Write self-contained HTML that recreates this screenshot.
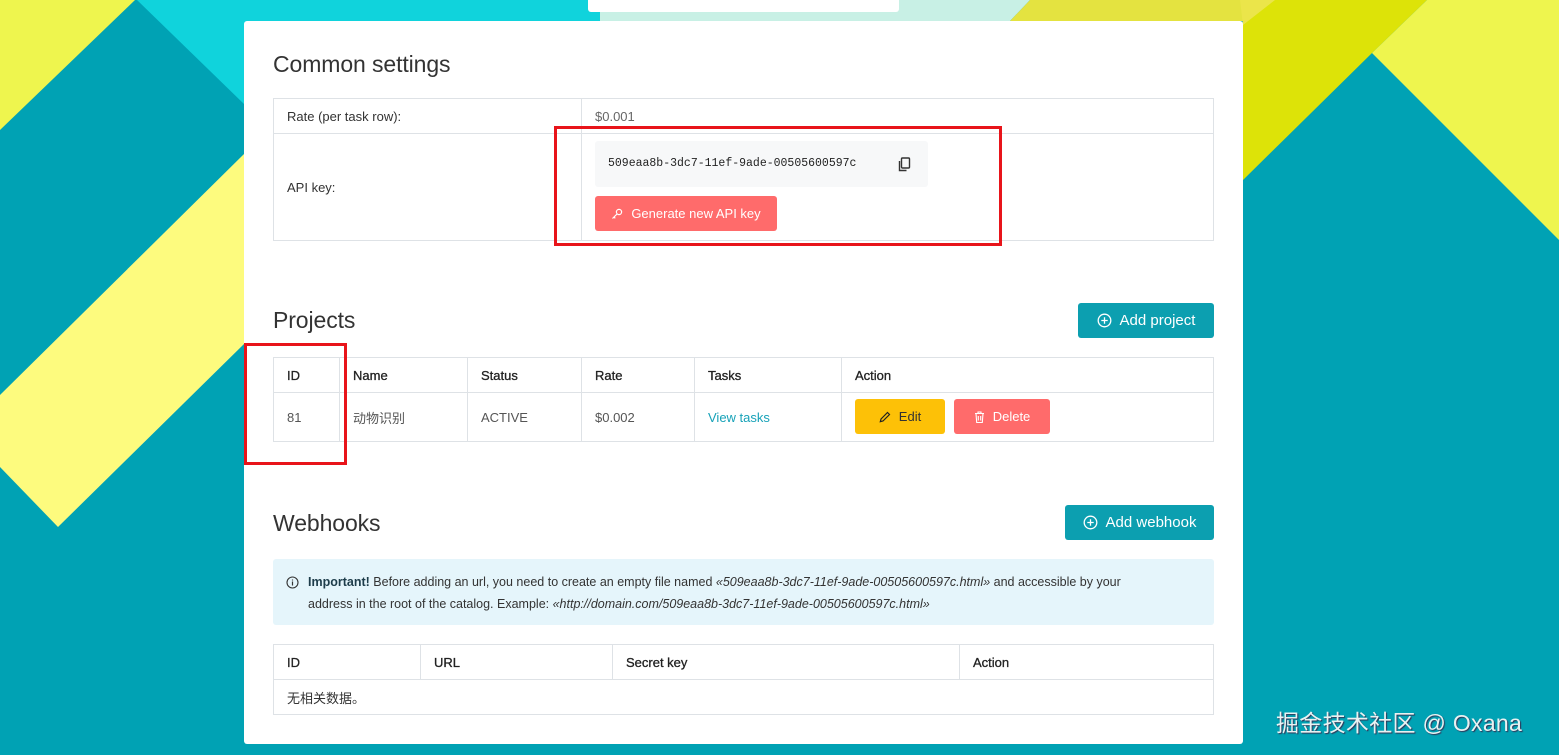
<!DOCTYPE html>
<html><head><meta charset="utf-8"><style>
*{margin:0;padding:0;box-sizing:border-box}
body{width:1559px;height:755px;overflow:hidden;position:relative;background:#00a2b4;font-family:"Liberation Sans","Noto Sans CJK SC",sans-serif;color:#333;font-size:13px}
.a{position:absolute}
svg.bg{position:absolute;left:0;top:0}
.card{left:244px;top:21px;width:999px;height:723px;background:#fff;border-radius:3px}
h2{position:absolute;font-weight:400;font-size:23px;color:#333;letter-spacing:-0.1px}
table{position:absolute;border-collapse:collapse;left:273px;width:941px}
td{border:1px solid #dee2e6;padding:0 13px;vertical-align:middle}
.hd td{color:#222;-webkit-text-stroke:0.3px #222}
.btn{position:absolute;border-radius:3px;color:#fff;font-size:14px;display:flex;align-items:center;justify-content:center;gap:8px}
.red{position:absolute;border:3px solid #e8141a}
</style></head><body>
<svg class="bg" width="1559" height="755">
<polygon points="0,0 135,0 0,130" fill="#eef54e"/>
<polygon points="137,0 600,0 600,30 244,30 244,104" fill="#10d3dc"/>
<polygon points="600,0 1030,0 1010,21 600,21" fill="#c8f0e5"/>
<polygon points="1030,0 1275,0 1255,21 1010,21" fill="#e4e340"/>
<polygon points="244,154 244,344 58,527 0,467 0,395" fill="#fdfb7e"/>
<polygon points="1243,0 1427,0 1372,53 1243,180" fill="#dde308"/>
<polygon points="1240,0 1275,0 1243,25" fill="#ebe54a"/>
<polygon points="1427,0 1559,0 1559,240 1372,53" fill="#eef54e"/>
</svg>
<div class="a" style="left:588px;top:0;width:311px;height:12px;background:#fff;border-radius:0 0 3px 3px"></div>
<div class="a card"></div>

<h2 style="left:273px;top:51px">Common settings</h2>
<table style="top:98px">
<tr style="height:35px"><td style="width:308px">Rate (per task row):</td><td style="color:#666">$0.001</td></tr>
<tr style="height:107px"><td>API key:</td><td></td></tr>
</table>
<div class="a" style="left:595px;top:141px;width:333px;height:46px;background:#f7f8f9;border-radius:3px"></div>
<div class="a" style="left:608px;top:157px;font-family:'Liberation Mono',monospace;font-size:11.5px;color:#222">509eaa8b-3dc7-11ef-9ade-00505600597c</div>
<svg class="a" style="left:897px;top:157px" width="14" height="15" viewBox="0 0 14 15"><rect x="4.5" y="1" width="8" height="10" rx="1" fill="none" stroke="#333" stroke-width="1.4"/><path d="M2.5 4v9.5h7" fill="none" stroke="#333" stroke-width="1.4"/></svg>
<div class="btn" style="left:595px;top:196px;width:182px;height:35px;background:#ff6b6b;font-size:13px">
<svg width="12" height="12" viewBox="0 0 12 12"><circle cx="8" cy="4" r="2.6" fill="none" stroke="#fff" stroke-width="1.2"/><path d="M6 6L1.5 10.5M3 9l1.3 1.3" stroke="#fff" stroke-width="1.2" fill="none"/></svg>Generate new API key</div>

<h2 style="left:273px;top:307px">Projects</h2>
<div class="btn" style="left:1078px;top:303px;width:136px;height:35px;background:#0c9fb0;font-size:15px">
<svg width="15" height="15" viewBox="0 0 15 15"><circle cx="7.5" cy="7.5" r="6.3" fill="none" stroke="#fff" stroke-width="1.3"/><path d="M7.5 4.3v6.4M4.3 7.5h6.4" stroke="#fff" stroke-width="1.3"/></svg>Add project</div>
<table style="top:357px">
<tr class="hd" style="height:35px"><td style="width:66px">ID</td><td style="width:128px">Name</td><td style="width:114px">Status</td><td style="width:113px">Rate</td><td style="width:147px">Tasks</td><td>Action</td></tr>
<tr style="height:49px;color:#555"><td>81</td><td>动物识别</td><td>ACTIVE</td><td>$0.002</td><td style="color:#17a2b8">View tasks</td><td></td></tr>
</table>
<div class="btn" style="left:855px;top:399px;width:90px;height:35px;background:#fdc107;color:#333;font-size:13px">
<svg width="12" height="12" viewBox="0 0 12 12"><path d="M8.5 1.5l2 2L4 10l-2.7.7L2 8z" fill="none" stroke="#222" stroke-width="1.2"/></svg>Edit</div>
<div class="btn" style="left:954px;top:399px;width:96px;height:35px;background:#ff6b6b;font-size:13px">
<svg width="11" height="12" viewBox="0 0 11 12"><path d="M1 2.5h9M4 2.5V1h3v1.5M2 2.5l.7 9h5.6l.7-9M4.3 5v4.5M6.7 5v4.5" fill="none" stroke="#fff" stroke-width="1.1"/></svg>Delete</div>

<h2 style="left:273px;top:510px">Webhooks</h2>
<div class="btn" style="left:1065px;top:505px;width:149px;height:35px;background:#0c9fb0;font-size:15px">
<svg width="15" height="15" viewBox="0 0 15 15"><circle cx="7.5" cy="7.5" r="6.3" fill="none" stroke="#fff" stroke-width="1.3"/><path d="M7.5 4.3v6.4M4.3 7.5h6.4" stroke="#fff" stroke-width="1.3"/></svg>Add webhook</div>
<div class="a" style="left:273px;top:559px;width:941px;height:66px;background:#e5f5fb;border-radius:3px"></div>
<svg class="a" style="left:286px;top:576px" width="13" height="13" viewBox="0 0 13 13"><circle cx="6.5" cy="6.5" r="5.5" fill="none" stroke="#333" stroke-width="1.1"/><path d="M6.5 5.5v4M6.5 3.5v1" stroke="#333" stroke-width="1.2"/></svg>
<div class="a" style="left:308px;top:571px;width:860px;font-size:12.5px;line-height:22px;color:#333"><b style="color:#1d3c4a">Important!</b> Before adding an url, you need to create an empty file named <i>«509eaa8b-3dc7-11ef-9ade-00505600597c.html»</i> and accessible by your address in the root of the catalog. Example: <i>«http://domain.com/509eaa8b-3dc7-11ef-9ade-00505600597c.html»</i></div>
<table style="top:644px">
<tr class="hd" style="height:35px"><td style="width:147px">ID</td><td style="width:192px">URL</td><td style="width:347px">Secret key</td><td>Action</td></tr>
<tr style="height:35px"><td colspan="4">无相关数据。</td></tr>
</table>

<div class="red" style="left:554px;top:126px;width:448px;height:120px"></div>
<div class="red" style="left:244px;top:343px;width:103px;height:122px"></div>

<div class="a" style="left:1276px;top:704px;font-size:23px;letter-spacing:0.3px;color:#e8f2f2;text-shadow:1px 1px 1px #335">掘金技术社区 @ Oxana</div>
</body></html>
